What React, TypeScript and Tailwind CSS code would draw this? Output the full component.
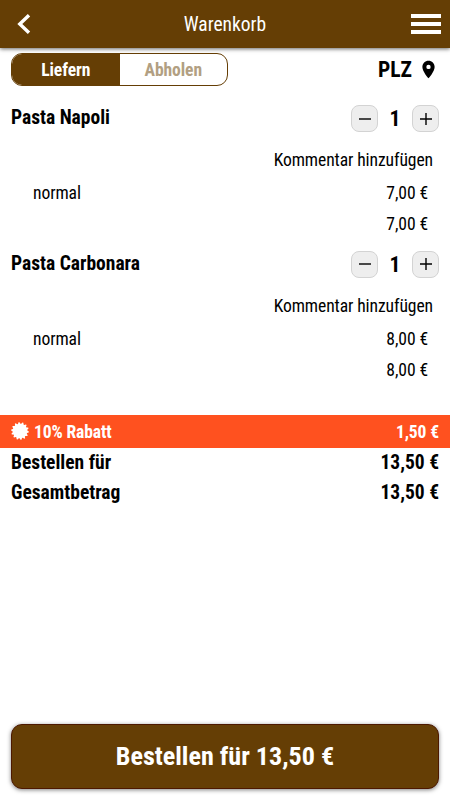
import type { ReactNode } from "react";
import { MdLocationOn } from "react-icons/md";

interface CartItem {
  name: string;
  variant: string;
  price: string;
  quantity: number;
}

const items: CartItem[] = [
  { name: "Pasta Napoli", variant: "normal", price: "7,00 €", quantity: 1 },
  { name: "Pasta Carbonara", variant: "normal", price: "8,00 €", quantity: 1 },
];

// Scalloped seal: 14 teeth around a disc
const sealPoints = Array.from({ length: 56 }, (_, i) => {
  const radius = i % 4 < 2 ? 11.8 : 9.8;
  const angle = ((i + 0.5) / 56) * Math.PI * 2;
  return `${(12 + radius * Math.cos(angle)).toFixed(2)},${(12 + radius * Math.sin(angle)).toFixed(2)}`;
}).join(" ");

function StepButton({ label, children }: { label: string; children: ReactNode }) {
  return (
    <button
      aria-label={label}
      className="flex size-[27px] items-center justify-center rounded-lg border border-[#d3d3d3] bg-[#eeeeee]"
    >
      <svg viewBox="0 0 12 12" className="size-3" stroke="black" strokeWidth="1.4">
        {children}
      </svg>
    </button>
  );
}

function CartRow({ item }: { item: CartItem }) {
  return (
    <section className="h-[145.6px] px-[11px] pt-[5px]">
      <div className="flex h-[27px] items-center justify-between">
        <h2 className="relative -top-px text-[19.5px]/[27px] font-bold">{item.name}</h2>
        <div className="flex items-center">
          <StepButton label="Weniger">
            <path d="M0 6h12" />
          </StepButton>
          <span className="w-[34px] text-center text-[21.6px]/[27px] font-bold">
            {item.quantity}
          </span>
          <StepButton label="Mehr">
            <path d="M0 6h12M6 0v12" />
          </StepButton>
        </div>
      </div>
      <p className="mt-[12.4px] pr-[6px] text-right text-[17.6px]/8 tracking-[-0.1px]">
        Kommentar hinzufügen
      </p>
      <div className="flex justify-between pt-px pr-[11px] pl-[22px] text-[17.6px]/8 tracking-[-0.1px]">
        <span>{item.variant}</span>
        <span>{item.price}</span>
      </div>
      <p className="-mt-px pr-[11px] text-right text-[17.6px]/8 tracking-[-0.1px]">{item.price}</p>
    </section>
  );
}

export default function App() {
  return (
    <div className="flex h-[800px] w-[450px] flex-col overflow-hidden bg-white font-['Roboto_Condensed','Roboto',sans-serif] text-black font-stretch-condensed">
      <header className="flex h-12 shrink-0 items-center justify-between bg-[#653e05] pr-[9px] pl-[17px] text-white shadow-[0_1px_4px_rgba(0,0,0,0.6)]">
        <svg viewBox="0 0 14 20" className="h-5 w-[14px]" fill="none" stroke="white" strokeWidth="3.4">
          <path d="M12 1.2L2.8 10l9.2 8.8" />
        </svg>
        <h1 className="pt-px pl-[8px] text-[19.5px]">Warenkorb</h1>
        <div className="flex w-[30px] flex-col gap-1">
          <span className="h-1 bg-white" />
          <span className="h-1 bg-white" />
          <span className="h-1 bg-white" />
        </div>
      </header>

      <div className="flex h-[52px] shrink-0 items-start justify-between pt-[5px] pr-[11px] pl-[11px]">
        <div className="flex h-[33px] w-[217px] overflow-hidden rounded-[11px] border border-[#653e05] text-[17.6px] font-bold tracking-[-0.1px]">
          <button className="w-[107.5px] bg-[#653e05] pt-[2px] text-white">Liefern</button>
          <button className="flex-1 pt-[2px] text-[#b29f82]">Abholen</button>
        </div>
        <div className="flex h-[33px] items-center gap-[6px] text-[21.6px] font-bold">
          <span className="pt-px">PLZ</span>
          <MdLocationOn className="size-[21px]" />
        </div>
      </div>

      <main className="h-[315px] shrink-0">
        {items.map((item) => (
          <CartRow key={item.name} item={item} />
        ))}
      </main>

      <div className="flex h-[33px] shrink-0 items-center justify-between bg-[#ff511f] px-[11px] pt-px text-[17.6px] font-bold tracking-[-0.15px] text-white">
        <span className="flex items-center gap-[5px]">
          <svg viewBox="0 0 24 24" className="mb-px size-[18px]" fill="white">
            <polygon points={sealPoints} />
          </svg>
          10% Rabatt
        </span>
        <span>1,50 €</span>
      </div>
      <dl className="px-[11px] text-[19.5px]/[29.5px] font-bold">
        <div className="flex justify-between">
          <dt>Bestellen für</dt>
          <dd>13,50 €</dd>
        </div>
        <div className="flex justify-between">
          <dt>Gesamtbetrag</dt>
          <dd>13,50 €</dd>
        </div>
      </dl>

      <button className="mx-[11px] mt-auto mb-[11px] h-[65px] shrink-0 rounded-[11px] border border-[#4d1800] bg-[#653e05] text-[26.1px] font-bold text-white shadow-[0_1px_4px_rgba(0,0,0,0.5)]">
        Bestellen für 13,50 €
      </button>
    </div>
  );
}
